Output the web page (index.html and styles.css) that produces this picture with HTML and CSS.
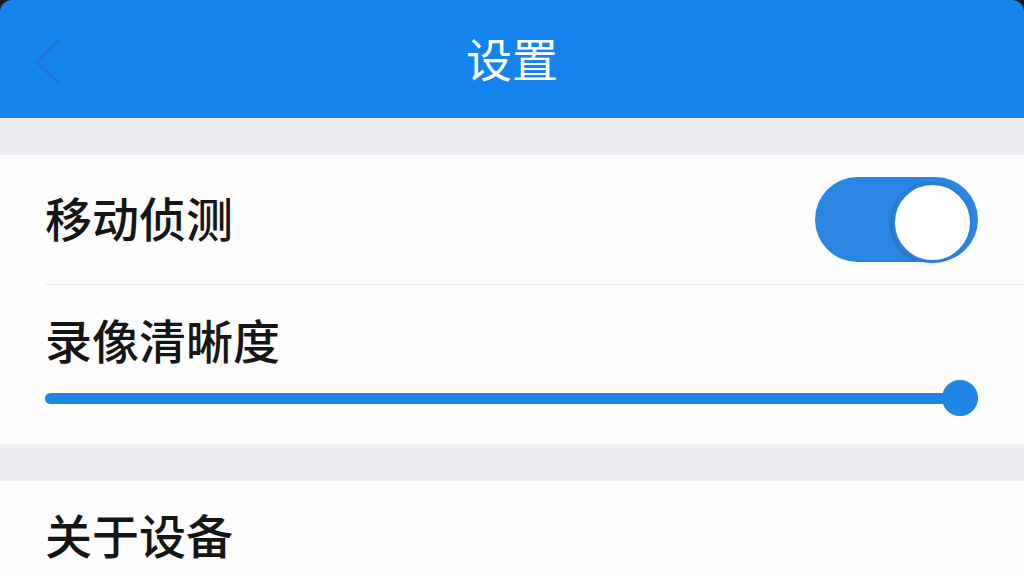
FILE: index.html
```html
<!DOCTYPE html>
<html lang="zh-CN">
<head>
    <meta charset="UTF-8">
    <meta name="viewport" content="width=device-width, initial-scale=1.0">
    <title>设置</title>
    <link rel="stylesheet" href="styles.css">
</head>
<body>
    <header class="topbar">
        <a class="back" href="#">
            <svg width="30" height="50" viewBox="0 0 30 50">
                <polyline points="27,3 5,25 27,47" fill="none" stroke="#2a6fc4" stroke-width="3"/>
            </svg>
        </a>
        <h1 class="title">设置</h1>
    </header>

    <div class="spacer"></div>

    <section class="group">
        <div class="row row-switch">
            <span class="label">移动侦测</span>
            <label class="switch">
                <input type="checkbox" checked>
                <span class="knob"></span>
            </label>
        </div>
        <div class="row row-slider">
            <span class="label">录像清晰度</span>
            <div class="slider">
                <div class="track"></div>
                <div class="thumb"></div>
            </div>
        </div>
    </section>

    <div class="spacer"></div>

    <section class="group">
        <div class="row row-plain">
            <span class="label">关于设备</span>
        </div>
    </section>
</body>
</html>
```

FILE: styles.css
```css
* {
    box-sizing: border-box;
}

body {
    margin: 0;
    background-color: #1c1c1e;
    font-family: "Noto Sans CJK SC", "Noto Sans", sans-serif;
    color: #151515;
    overflow: hidden;
}

.topbar {
    height: 118px;
    background-color: #1483ee;
    border-radius: 12px 12px 0 0;
    display: flex;
    align-items: center;
    justify-content: center;
    position: relative;
}

.back {
    position: absolute;
    left: 32px;
    top: 37px;
    display: block;
    opacity: 0.7;
}

.title {
    margin: 0 0 4px;
    color: #fff;
    font-size: 46px;
    font-weight: 400;
}

.spacer {
    height: 37px;
    background-color: #efeef3;
}

.group {
    background-color: #fdfdfd;
    padding-left: 45px;
}

.label {
    font-size: 47px;
    line-height: 58px;
    font-weight: 500;
}

.row-switch {
    height: 130px;
    padding-right: 46px;
    display: flex;
    align-items: center;
    justify-content: space-between;
    border-bottom: 1px solid #ebebeb;
}

.row-switch .label {
    margin-bottom: 6px;
}

.switch {
    width: 163px;
    height: 85px;
    position: relative;
    display: block;
}

.switch input {
    display: none;
}

.switch .knob {
    display: block;
    width: 100%;
    height: 100%;
    border-radius: 43px;
    background-color: #2a86e2;
    position: relative;
}

.switch .knob::after {
    content: "";
    position: absolute;
    right: 5px;
    top: 5px;
    width: 75px;
    height: 75px;
    border-radius: 50%;
    background-color: #fff;
    border: 3px solid #2a7fd8;
    box-shadow: -2px 1px 3px rgba(0, 0, 0, 0.15);
}

.row-slider {
    height: 159px;
    padding-top: 25px;
    padding-right: 46px;
}

.slider {
    margin-top: 12px;
    height: 36px;
    position: relative;
    display: flex;
    align-items: center;
}

.track {
    width: 100%;
    height: 11px;
    border-radius: 6px;
    background-color: #1f86e6;
}

.thumb {
    position: absolute;
    right: 0;
    top: 0;
    width: 36px;
    height: 36px;
    border-radius: 50%;
    background-color: #1f86e6;
}

.row-plain {
    height: 95px;
    display: flex;
    align-items: center;
    padding-top: 10px;
}
```
